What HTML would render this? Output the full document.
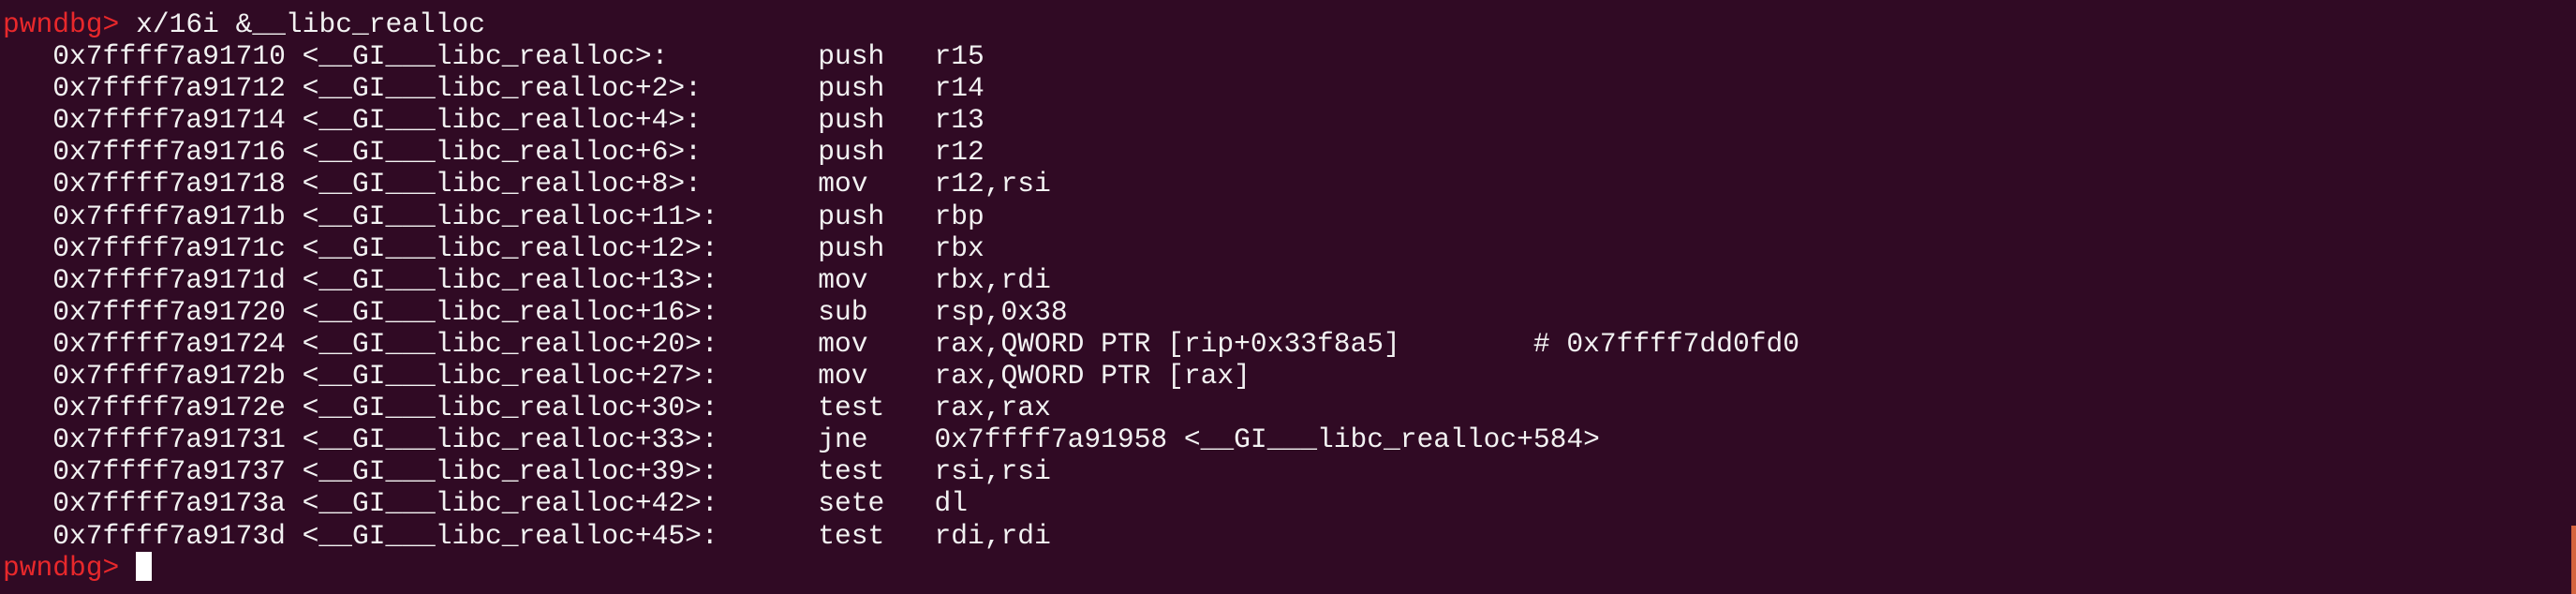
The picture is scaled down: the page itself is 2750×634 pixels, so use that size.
<!DOCTYPE html>
<html><head><meta charset="utf-8"><style>
html,body{margin:0;padding:0;background:#300a24;width:2750px;height:634px;overflow:hidden}
pre{position:absolute;left:3px;top:9px;margin:0;font-family:"Liberation Mono",monospace;font-size:29.6px;line-height:34.1px;color:#f2f2f2;white-space:pre}
.p{color:#e8282b}
.c{display:inline-block;width:17px;height:31px;background:#fff;vertical-align:-6px}
.sb{position:absolute;left:2745px;top:561px;width:5px;height:73px;background:#d5643d}
</style></head><body>
<pre><span class="p">pwndbg&gt;</span> x/16i &amp;__libc_realloc
   0x7ffff7a91710 &lt;__GI___libc_realloc&gt;:         push   r15
   0x7ffff7a91712 &lt;__GI___libc_realloc+2&gt;:       push   r14
   0x7ffff7a91714 &lt;__GI___libc_realloc+4&gt;:       push   r13
   0x7ffff7a91716 &lt;__GI___libc_realloc+6&gt;:       push   r12
   0x7ffff7a91718 &lt;__GI___libc_realloc+8&gt;:       mov    r12,rsi
   0x7ffff7a9171b &lt;__GI___libc_realloc+11&gt;:      push   rbp
   0x7ffff7a9171c &lt;__GI___libc_realloc+12&gt;:      push   rbx
   0x7ffff7a9171d &lt;__GI___libc_realloc+13&gt;:      mov    rbx,rdi
   0x7ffff7a91720 &lt;__GI___libc_realloc+16&gt;:      sub    rsp,0x38
   0x7ffff7a91724 &lt;__GI___libc_realloc+20&gt;:      mov    rax,QWORD PTR [rip+0x33f8a5]        # 0x7ffff7dd0fd0
   0x7ffff7a9172b &lt;__GI___libc_realloc+27&gt;:      mov    rax,QWORD PTR [rax]
   0x7ffff7a9172e &lt;__GI___libc_realloc+30&gt;:      test   rax,rax
   0x7ffff7a91731 &lt;__GI___libc_realloc+33&gt;:      jne    0x7ffff7a91958 &lt;__GI___libc_realloc+584&gt;
   0x7ffff7a91737 &lt;__GI___libc_realloc+39&gt;:      test   rsi,rsi
   0x7ffff7a9173a &lt;__GI___libc_realloc+42&gt;:      sete   dl
   0x7ffff7a9173d &lt;__GI___libc_realloc+45&gt;:      test   rdi,rdi
<span class="p">pwndbg&gt;</span> <span class="c"></span></pre>
<div class="sb"></div>
</body></html>
